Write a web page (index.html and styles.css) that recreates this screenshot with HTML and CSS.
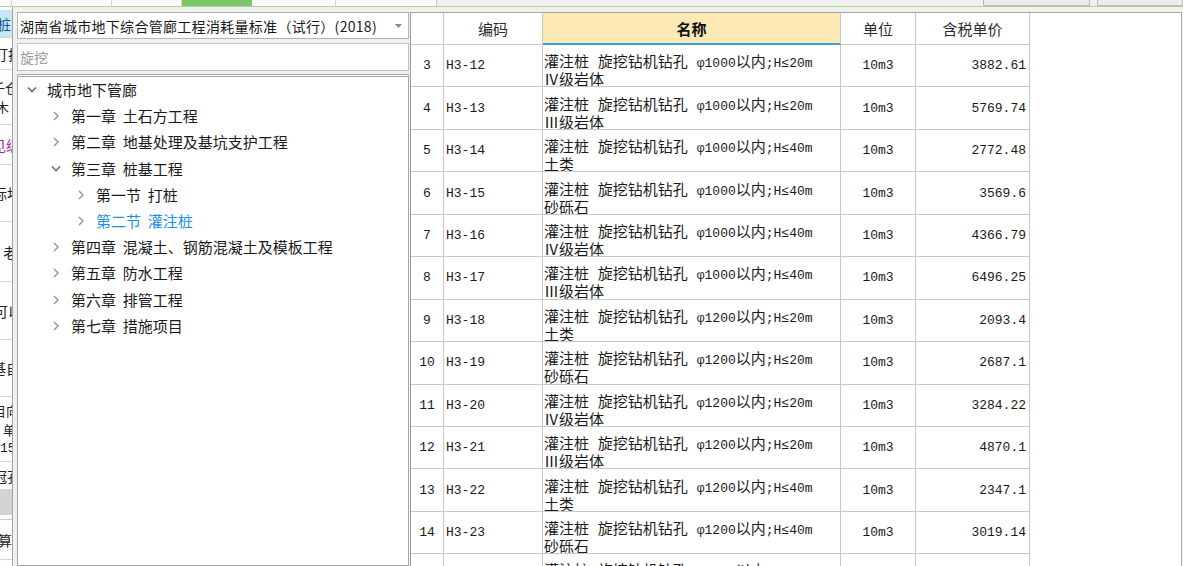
FILE: index.html
```html
<!DOCTYPE html>
<html lang="zh-CN">
<head>
<meta charset="utf-8">
<title>定额查询</title>
<link rel="stylesheet" href="styles.css">
</head>
<body>
<div class="topbar">
  <div class="tb-cell w12"></div>
  <div class="tb-cell w100"></div>
  <div class="tb-cell w70"></div>
  <div class="tb-cell w70 tb-active"></div>
  <div class="tb-cell w84"></div>
  <div class="tb-cell w101"></div>
  <div class="tb-spacer"></div>
  <div class="tb-btn w107"></div>
  <div class="tb-btn w86"></div>
</div>
<div class="main">
  <div class="side-strip">
    <div class="ss-cell ss-sel h28"><span class="ss-text ss-blue">桩</span></div>
    <div class="ss-cell h32"><span class="ss-text off6">打拉</span></div>
    <div class="ss-cell h55 ss-col"><span class="ss-text off8">千仓</span><span class="ss-text off4">木</span></div>
    <div class="ss-cell h40"><span class="ss-text ss-purple off8">见级</span></div>
    <div class="ss-cell h57"><span class="ss-text off7">标坫</span></div>
    <div class="ss-cell h60"><span class="ss-text">&nbsp;老</span></div>
    <div class="ss-cell h58"><span class="ss-text off6">可以</span></div>
    <div class="ss-cell h57"><span class="ss-text off8">基自</span></div>
    <div class="ss-cell h65 ss-col"><span class="ss-text off7">目向</span><span class="ss-text">&nbsp;单</span><span class="ss-text ss-small">15</span></div>
    <div class="ss-cell h28"><span class="ss-text off7">冠孔</span></div>
    <div class="ss-gray"></div>
    <div class="ss-green"></div>
    <div class="ss-cell h40"><span class="ss-text off2">算</span></div>
  </div>
  <div class="splitter"></div>
  <div class="left-panel">
    <div class="combo">
      <span class="combo-text">湖南省城市地下综合管廊工程消耗量标准（试行）(2018)</span>
      <svg class="combo-arrow" width="7" height="4" viewBox="0 0 7 4"><path d="M0 0H7L3.5 4Z" fill="#8c8c8c"/></svg>
    </div>
    <div class="search"><span class="search-text">旋挖</span></div>
    <div class="tree">
      <div class="node lv0">
        <svg class="chev" width="16" height="10" viewBox="0 0 16 10"><path d="M4 2.5L8 6.5L12 2.5" fill="none" stroke="#6e6e6e" stroke-width="1.6"/></svg>
        <span>城市地下管廊</span>
      </div>
      <div class="node lv1">
        <svg class="chev" width="16" height="10" viewBox="0 0 16 10"><path d="M6 1L10 5L6 9" fill="none" stroke="#9a9a9a" stroke-width="1.5"/></svg>
        <span>第一章&nbsp;&nbsp;土石方工程</span>
      </div>
      <div class="node lv1">
        <svg class="chev" width="16" height="10" viewBox="0 0 16 10"><path d="M6 1L10 5L6 9" fill="none" stroke="#9a9a9a" stroke-width="1.5"/></svg>
        <span>第二章&nbsp;&nbsp;地基处理及基坑支护工程</span>
      </div>
      <div class="node lv1">
        <svg class="chev" width="16" height="10" viewBox="0 0 16 10"><path d="M4 2.5L8 6.5L12 2.5" fill="none" stroke="#6e6e6e" stroke-width="1.6"/></svg>
        <span>第三章&nbsp;&nbsp;桩基工程</span>
      </div>
      <div class="node lv2">
        <svg class="chev" width="16" height="10" viewBox="0 0 16 10"><path d="M6 1L10 5L6 9" fill="none" stroke="#9a9a9a" stroke-width="1.5"/></svg>
        <span>第一节&nbsp;&nbsp;打桩</span>
      </div>
      <div class="node lv2 node-sel">
        <svg class="chev" width="16" height="10" viewBox="0 0 16 10"><path d="M6 1L10 5L6 9" fill="none" stroke="#9a9a9a" stroke-width="1.5"/></svg>
        <span>第二节&nbsp;&nbsp;灌注桩</span>
      </div>
      <div class="node lv1">
        <svg class="chev" width="16" height="10" viewBox="0 0 16 10"><path d="M6 1L10 5L6 9" fill="none" stroke="#9a9a9a" stroke-width="1.5"/></svg>
        <span>第四章&nbsp;&nbsp;混凝土、钢筋混凝土及模板工程</span>
      </div>
      <div class="node lv1">
        <svg class="chev" width="16" height="10" viewBox="0 0 16 10"><path d="M6 1L10 5L6 9" fill="none" stroke="#9a9a9a" stroke-width="1.5"/></svg>
        <span>第五章&nbsp;&nbsp;防水工程</span>
      </div>
      <div class="node lv1">
        <svg class="chev" width="16" height="10" viewBox="0 0 16 10"><path d="M6 1L10 5L6 9" fill="none" stroke="#9a9a9a" stroke-width="1.5"/></svg>
        <span>第六章&nbsp;&nbsp;排管工程</span>
      </div>
      <div class="node lv1">
        <svg class="chev" width="16" height="10" viewBox="0 0 16 10"><path d="M6 1L10 5L6 9" fill="none" stroke="#9a9a9a" stroke-width="1.5"/></svg>
        <span>第七章&nbsp;&nbsp;措施项目</span>
      </div>
    </div>
  </div>
  <div class="right-panel">
    <div class="grid">
      <div class="hd"></div>
      <div class="hd">编码</div>
      <div class="hd hd-active">名称</div>
      <div class="hd">单位</div>
      <div class="hd">含税单价</div>

      <div class="cell c-num">3</div><div class="cell c-code">H3-12</div><div class="cell c-name"><span>灌注桩 旋挖钻机钻孔 <span class="lat">φ1000</span>以内<span class="lat">;H≤20m</span></span><span>Ⅳ级岩体</span></div><div class="cell c-unit">10m3</div><div class="cell c-price">3882.61</div>
      <div class="cell c-num">4</div><div class="cell c-code">H3-13</div><div class="cell c-name"><span>灌注桩 旋挖钻机钻孔 <span class="lat">φ1000</span>以内<span class="lat">;H≤20m</span></span><span>Ⅲ级岩体</span></div><div class="cell c-unit">10m3</div><div class="cell c-price">5769.74</div>
      <div class="cell c-num">5</div><div class="cell c-code">H3-14</div><div class="cell c-name"><span>灌注桩 旋挖钻机钻孔 <span class="lat">φ1000</span>以内<span class="lat">;H≤40m</span></span><span>土类</span></div><div class="cell c-unit">10m3</div><div class="cell c-price">2772.48</div>
      <div class="cell c-num">6</div><div class="cell c-code">H3-15</div><div class="cell c-name"><span>灌注桩 旋挖钻机钻孔 <span class="lat">φ1000</span>以内<span class="lat">;H≤40m</span></span><span>砂砾石</span></div><div class="cell c-unit">10m3</div><div class="cell c-price">3569.6</div>
      <div class="cell c-num">7</div><div class="cell c-code">H3-16</div><div class="cell c-name"><span>灌注桩 旋挖钻机钻孔 <span class="lat">φ1000</span>以内<span class="lat">;H≤40m</span></span><span>Ⅳ级岩体</span></div><div class="cell c-unit">10m3</div><div class="cell c-price">4366.79</div>
      <div class="cell c-num">8</div><div class="cell c-code">H3-17</div><div class="cell c-name"><span>灌注桩 旋挖钻机钻孔 <span class="lat">φ1000</span>以内<span class="lat">;H≤40m</span></span><span>Ⅲ级岩体</span></div><div class="cell c-unit">10m3</div><div class="cell c-price">6496.25</div>
      <div class="cell c-num">9</div><div class="cell c-code">H3-18</div><div class="cell c-name"><span>灌注桩 旋挖钻机钻孔 <span class="lat">φ1200</span>以内<span class="lat">;H≤20m</span></span><span>土类</span></div><div class="cell c-unit">10m3</div><div class="cell c-price">2093.4</div>
      <div class="cell c-num">10</div><div class="cell c-code">H3-19</div><div class="cell c-name"><span>灌注桩 旋挖钻机钻孔 <span class="lat">φ1200</span>以内<span class="lat">;H≤20m</span></span><span>砂砾石</span></div><div class="cell c-unit">10m3</div><div class="cell c-price">2687.1</div>
      <div class="cell c-num">11</div><div class="cell c-code">H3-20</div><div class="cell c-name"><span>灌注桩 旋挖钻机钻孔 <span class="lat">φ1200</span>以内<span class="lat">;H≤20m</span></span><span>Ⅳ级岩体</span></div><div class="cell c-unit">10m3</div><div class="cell c-price">3284.22</div>
      <div class="cell c-num">12</div><div class="cell c-code">H3-21</div><div class="cell c-name"><span>灌注桩 旋挖钻机钻孔 <span class="lat">φ1200</span>以内<span class="lat">;H≤20m</span></span><span>Ⅲ级岩体</span></div><div class="cell c-unit">10m3</div><div class="cell c-price">4870.1</div>
      <div class="cell c-num">13</div><div class="cell c-code">H3-22</div><div class="cell c-name"><span>灌注桩 旋挖钻机钻孔 <span class="lat">φ1200</span>以内<span class="lat">;H≤40m</span></span><span>土类</span></div><div class="cell c-unit">10m3</div><div class="cell c-price">2347.1</div>
      <div class="cell c-num">14</div><div class="cell c-code">H3-23</div><div class="cell c-name"><span>灌注桩 旋挖钻机钻孔 <span class="lat">φ1200</span>以内<span class="lat">;H≤40m</span></span><span>砂砾石</span></div><div class="cell c-unit">10m3</div><div class="cell c-price">3019.14</div>
      <div class="cell c-num">15</div><div class="cell c-code">H3-24</div><div class="cell c-name"><span>灌注桩 旋挖钻机钻孔 <span class="lat">φ1200</span>以内<span class="lat">;H≤40m</span></span><span>Ⅳ级岩体</span></div><div class="cell c-unit">10m3</div><div class="cell c-price">3935.17</div>
    </div>
  </div>
</div>
</body>
</html>
```
FILE: styles.css
```css
* { box-sizing: border-box; }
html, body { margin: 0; padding: 0; }
body {
  width: 1183px;
  height: 566px;
  overflow: hidden;
  background: #f0f0f0;
  font-family: "Noto Sans CJK SC", "Noto Sans", sans-serif;
  color: #1e1e1e;
}

/* top strip */
.topbar {
  display: flex;
  height: 7px;
  border-bottom: 1px solid #a9da93;
}
.tb-cell { height: 6px; background: #fbfbfb; border-right: 1px solid #cfd8cb; }
.tb-active { background: #7fc56c; border-right-color: #7fc56c; }
.tb-spacer { flex: 1; background: #f0f0f0; }
.tb-btn { height: 6px; background: #ececec; border: 1px solid #b9b9b9; border-top: none; }
.tb-btn + .tb-btn { margin-left: 7px; }
.w12 { width: 12px; }
.w100 { width: 100px; }
.w70 { width: 70px; }
.w84 { width: 84px; }
.w101 { width: 101px; }
.w107 { width: 107px; }
.w86 { width: 86px; }

.main {
  display: flex;
  height: 559px;
}

/* clipped panel on the far left */
.side-strip {
  width: 12px;
  background: #fdfdfd;
  overflow: hidden;
  display: flex;
  flex-direction: column;
  padding-top: 3px;
}
.ss-cell {
  display: flex;
  align-items: center;
  border-bottom: 1px solid #d6d6d6;
  overflow: hidden;
  white-space: nowrap;
  flex: none;
}
.ss-col { flex-direction: column; align-items: flex-start; justify-content: center; }
.ss-sel { background: #c7e6f6; }
.ss-text { font-size: 14px; line-height: 20px; color: #222; }
.ss-col .ss-text { font-size: 13px; line-height: 19px; }
.ss-blue { color: #1b4f8a; margin-left: -3px; }
.ss-purple { color: #9a2aa8; }
.ss-col .ss-small { font-size: 13px; line-height: 19px; font-family: "Liberation Mono", monospace; }
.off2 { margin-left: -2px; }
.off4 { margin-left: -4px; }
.off6 { margin-left: -6px; }
.off7 { margin-left: -7px; }
.off8 { margin-left: -8px; }
.h28 { height: 28px; }
.h32 { height: 32px; }
.h40 { height: 40px; }
.h55 { height: 55px; }
.h57 { height: 57px; }
.h58 { height: 58px; }
.h60 { height: 60px; }
.h65 { height: 65px; }
.ss-gray { height: 25px; background: #d4d4d4; flex: none; }
.ss-green { height: 5px; border-bottom: 1px solid #b7e0a8; flex: none; }

.splitter {
  width: 5px;
  border-left: 1px solid #a3a3a3;
  background: #f0f0f0;
}

/* left panel */
.left-panel {
  width: 392px;
  padding-top: 5px;
  display: flex;
  flex-direction: column;
}
.combo {
  height: 27px;
  background: #fff;
  border: 1px solid #b4b4b4;
  display: flex;
  align-items: center;
  padding-left: 2px;
  padding-right: 6px;
}
.combo-text {
  flex: 1;
  font-size: 14px;
  letter-spacing: 0.3px;
  line-height: 18px;
  color: #1a1a1a;
  white-space: nowrap;
}
.combo-arrow { flex: none; }
.search {
  margin-top: 4px;
  height: 28px;
  background: #fff;
  border: 1px solid #c2c2c2;
  display: flex;
  align-items: center;
  padding-left: 2px;
}
.search-text { font-size: 14px; color: #9b9b9b; line-height: 18px; }
.tree {
  margin-top: 3px;
  flex: 1;
  background: #fff;
  border: 1px solid #a8a8a8;
  border-top: 3px double #a9a9a9;
}
.node {
  height: 26.2px;
  display: flex;
  align-items: center;
  font-size: 15px;
  line-height: 20px;
  color: #1a1a1a;
  white-space: nowrap;
}
.node .chev { flex: none; margin-right: 7px; }
.lv0 { padding-left: 6px; }
.lv1 { padding-left: 30px; }
.lv2 { padding-left: 55px; }
.node-sel { color: #1a8fe8; }

/* right panel / grid */
.right-panel {
  flex: 1;
  margin: 5px 1px 0 1px;
  background: #fff;
  border-top: 1px solid #a6a6a6;
  border-left: 1px solid #9c9c9c;
  border-right: 1px solid #b0b0b0;
  overflow: hidden;
}
.grid {
  display: grid;
  grid-template-columns: 33px 99px 298px 75px 114px;
  grid-template-rows: 32px;
  grid-auto-rows: 42.45px;
  width: 619px;
}
.hd {
  border-right: 1px solid #c9c9c9;
  border-bottom: 1px solid #c9c9c9;
  display: flex;
  align-items: center;
  justify-content: center;
  font-size: 15px;
  color: #2a2a2a;
  background: #fff;
}
.hd-active {
  background: #fde9b3;
  border-bottom: 2px solid #3b9ee3;
  font-weight: bold;
  color: #111;
}
.cell {
  border-right: 1px solid #c9c9c9;
  border-bottom: 1px solid #c9c9c9;
  display: flex;
  align-items: center;
  font-family: "Liberation Mono", "Noto Sans CJK SC", sans-serif;
  font-size: 13px;
  color: #1a1a1a;
  overflow: hidden;
  white-space: nowrap;
}
.c-num { justify-content: center; }
.c-code { padding-left: 2px; }
.c-name {
  flex-direction: column;
  align-items: flex-start;
  justify-content: center;
  padding-left: 1px;
  padding-top: 8px;
  line-height: 15px;
  font-family: "Noto Sans CJK SC", sans-serif;
  font-size: 15px;
  word-spacing: 5.5px;
}
.c-name .lat {
  font-family: "Liberation Mono", "Noto Sans CJK SC", sans-serif;
  font-size: 13px;
  word-spacing: 0;
}
.c-unit { justify-content: center; }
.c-price { justify-content: flex-end; padding-right: 3px; }
```
